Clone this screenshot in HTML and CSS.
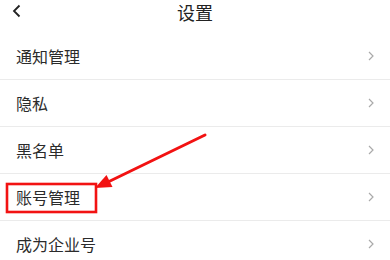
FILE: index.html
```html
<!DOCTYPE html>
<html lang="zh-CN">
<head>
    <meta charset="UTF-8">
    <meta name="viewport" content="width=device-width, initial-scale=1.0">
    <title>设置</title>
    <link rel="stylesheet" href="styles.css">
</head>
<body>
    <div class="page">
        <div class="topbar">
            <svg class="back" width="10" height="14" viewBox="0 0 10 14">
                <path d="M7.5 1.5 L2 7 L7.5 12.5" fill="none" stroke="#222" stroke-width="1.8"/>
            </svg>
            <h1 class="title">设置</h1>
        </div>

        <ul class="menu">
            <li class="item"><span>通知管理</span><svg class="arrow" width="8" height="12" viewBox="0 0 8 12"><path d="M2 2 L6 6 L2 10" fill="none" stroke="#aaa" stroke-width="1.2"/></svg></li>
            <li class="item"><span>隐私</span><svg class="arrow" width="8" height="12" viewBox="0 0 8 12"><path d="M2 2 L6 6 L2 10" fill="none" stroke="#aaa" stroke-width="1.2"/></svg></li>
            <li class="item"><span>黑名单</span><svg class="arrow" width="8" height="12" viewBox="0 0 8 12"><path d="M2 2 L6 6 L2 10" fill="none" stroke="#aaa" stroke-width="1.2"/></svg></li>
            <li class="item"><span>账号管理</span><svg class="arrow" width="8" height="12" viewBox="0 0 8 12"><path d="M2 2 L6 6 L2 10" fill="none" stroke="#aaa" stroke-width="1.2"/></svg></li>
            <li class="item"><span>成为企业号</span><svg class="arrow" width="8" height="12" viewBox="0 0 8 12"><path d="M2 2 L6 6 L2 10" fill="none" stroke="#aaa" stroke-width="1.2"/></svg></li>
        </ul>

        <!-- marcação vermelha por cima -->
        <svg class="mark" width="390" height="260" viewBox="0 0 390 260">
            <rect x="7" y="184" width="89" height="28" fill="none" stroke="#f21212" stroke-width="2.6"/>
            <line x1="205" y1="135" x2="108" y2="182" stroke="#f21212" stroke-width="3" stroke-linecap="round"/>
            <polygon points="95,188 106.5,175 112.5,187" fill="#f21212"/>
        </svg>
    </div>
</body>
</html>
```

FILE: styles.css
```css
body {
    margin: 0;
    background: #fff;
    font-family: "Noto Sans CJK SC", "Noto Sans", sans-serif;
    color: #2b2b2b;
}

.page {
    position: relative;
    width: 390px;
    height: 260px;
    overflow: hidden;
}

.topbar {
    position: relative;
    height: 33px;
    display: flex;
    justify-content: center;
}

.back {
    position: absolute;
    left: 12px;
    top: 4px;
}

.title {
    margin: 0;
    font-size: 18px;
    font-weight: normal;
    line-height: 24px;
    color: #222;
}

.menu {
    list-style-type: none;
    margin: 0;
    padding: 0;
}

.item {
    height: 46px;
    border-bottom: 1px solid #ebebeb;
    padding: 0 16px;
    display: flex;
    justify-content: space-between;
    align-items: center;
    font-size: 16px;
}

.arrow {
    margin-right: -1px;
}

.mark {
    position: absolute;
    left: 0;
    top: 0;
}
```
